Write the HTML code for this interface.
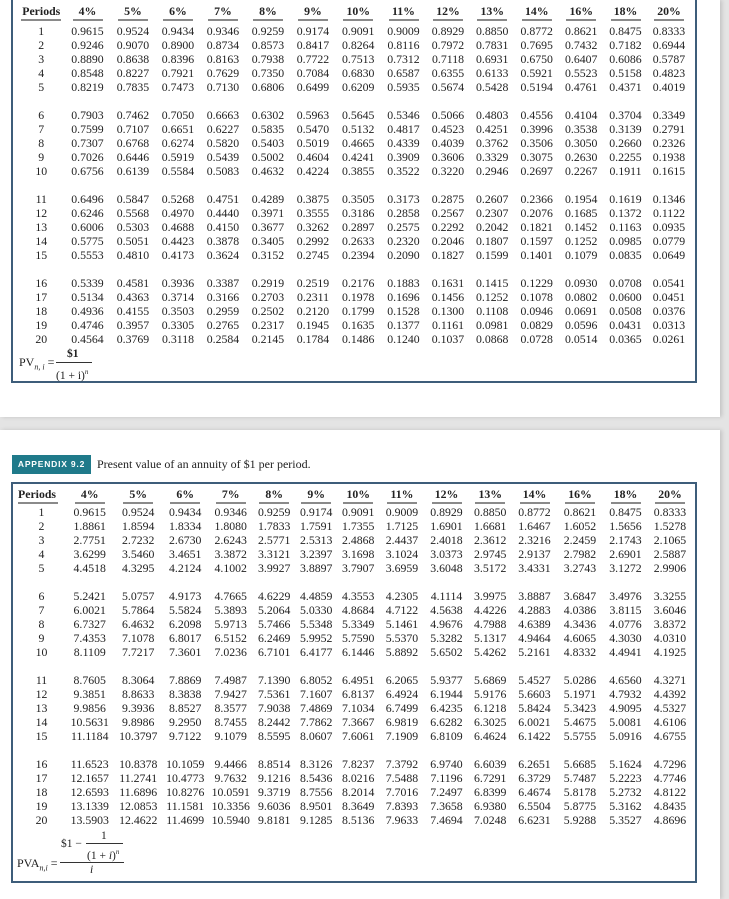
<!DOCTYPE html>
<html><head><meta charset="utf-8"><style>
html,body{margin:0;padding:0;}
body{width:729px;height:899px;background:#e4e4e4;position:relative;overflow:hidden;font-family:"Liberation Serif",serif;color:#222;}
.pg{position:absolute;left:0;width:720px;background:#fff;box-shadow:2px 0 4px rgba(0,0,0,.15);}
.box{position:absolute;border:2px solid #3e5d7a;}
table{position:absolute;left:18px;border-collapse:collapse;table-layout:fixed;font-size:11.8px;}
td{text-align:center;padding:0;height:14px;line-height:14px;white-space:nowrap;}
th{padding:0;vertical-align:top;font-weight:bold;font-size:11.8px;}
th span{display:inline-block;width:30px;line-height:13px;border-bottom:2px solid #8a8a8a;padding-bottom:1px;}
th.p span{width:40px;}
tr.g td{height:14px;}
.a{position:absolute;font-size:11.5px;white-space:nowrap;line-height:13px;}
</style></head><body>
<div class="pg" style="top:0;height:417px"></div>
<div class="pg" style="top:430px;height:469px"></div>
<div class="box" style="left:11px;top:-2px;width:682px;height:381px"></div>
<div class="box" style="left:11px;top:482px;width:682px;height:397px"></div>

<table style="top:0">
<colgroup><col style="width:46.5px"><col style="width:46px"><col style="width:45px"><col style="width:45px"><col style="width:45px"><col style="width:45px"><col style="width:45px"><col style="width:45.5px"><col style="width:45px"><col style="width:44px"><col style="width:44.5px"><col style="width:44.5px"><col style="width:44.5px"><col style="width:44px"><col style="width:43px"></colgroup>
<tr style="height:24px"><th class="p" style="padding-top:4px"><span>Periods</span></th><th style="padding-top:4px"><span>4%</span></th><th style="padding-top:4px"><span>5%</span></th><th style="padding-top:4px"><span>6%</span></th><th style="padding-top:4px"><span>7%</span></th><th style="padding-top:4px"><span>8%</span></th><th style="padding-top:4px"><span>9%</span></th><th style="padding-top:4px"><span>10%</span></th><th style="padding-top:4px"><span>11%</span></th><th style="padding-top:4px"><span>12%</span></th><th style="padding-top:4px"><span>13%</span></th><th style="padding-top:4px"><span>14%</span></th><th style="padding-top:4px"><span>16%</span></th><th style="padding-top:4px"><span>18%</span></th><th style="padding-top:4px"><span>20%</span></th></tr>
<tr><td>1</td><td>0.9615</td><td>0.9524</td><td>0.9434</td><td>0.9346</td><td>0.9259</td><td>0.9174</td><td>0.9091</td><td>0.9009</td><td>0.8929</td><td>0.8850</td><td>0.8772</td><td>0.8621</td><td>0.8475</td><td>0.8333</td></tr>
<tr><td>2</td><td>0.9246</td><td>0.9070</td><td>0.8900</td><td>0.8734</td><td>0.8573</td><td>0.8417</td><td>0.8264</td><td>0.8116</td><td>0.7972</td><td>0.7831</td><td>0.7695</td><td>0.7432</td><td>0.7182</td><td>0.6944</td></tr>
<tr><td>3</td><td>0.8890</td><td>0.8638</td><td>0.8396</td><td>0.8163</td><td>0.7938</td><td>0.7722</td><td>0.7513</td><td>0.7312</td><td>0.7118</td><td>0.6931</td><td>0.6750</td><td>0.6407</td><td>0.6086</td><td>0.5787</td></tr>
<tr><td>4</td><td>0.8548</td><td>0.8227</td><td>0.7921</td><td>0.7629</td><td>0.7350</td><td>0.7084</td><td>0.6830</td><td>0.6587</td><td>0.6355</td><td>0.6133</td><td>0.5921</td><td>0.5523</td><td>0.5158</td><td>0.4823</td></tr>
<tr><td>5</td><td>0.8219</td><td>0.7835</td><td>0.7473</td><td>0.7130</td><td>0.6806</td><td>0.6499</td><td>0.6209</td><td>0.5935</td><td>0.5674</td><td>0.5428</td><td>0.5194</td><td>0.4761</td><td>0.4371</td><td>0.4019</td></tr>
<tr class="g"><td colspan="15"></td></tr>
<tr><td>6</td><td>0.7903</td><td>0.7462</td><td>0.7050</td><td>0.6663</td><td>0.6302</td><td>0.5963</td><td>0.5645</td><td>0.5346</td><td>0.5066</td><td>0.4803</td><td>0.4556</td><td>0.4104</td><td>0.3704</td><td>0.3349</td></tr>
<tr><td>7</td><td>0.7599</td><td>0.7107</td><td>0.6651</td><td>0.6227</td><td>0.5835</td><td>0.5470</td><td>0.5132</td><td>0.4817</td><td>0.4523</td><td>0.4251</td><td>0.3996</td><td>0.3538</td><td>0.3139</td><td>0.2791</td></tr>
<tr><td>8</td><td>0.7307</td><td>0.6768</td><td>0.6274</td><td>0.5820</td><td>0.5403</td><td>0.5019</td><td>0.4665</td><td>0.4339</td><td>0.4039</td><td>0.3762</td><td>0.3506</td><td>0.3050</td><td>0.2660</td><td>0.2326</td></tr>
<tr><td>9</td><td>0.7026</td><td>0.6446</td><td>0.5919</td><td>0.5439</td><td>0.5002</td><td>0.4604</td><td>0.4241</td><td>0.3909</td><td>0.3606</td><td>0.3329</td><td>0.3075</td><td>0.2630</td><td>0.2255</td><td>0.1938</td></tr>
<tr><td>10</td><td>0.6756</td><td>0.6139</td><td>0.5584</td><td>0.5083</td><td>0.4632</td><td>0.4224</td><td>0.3855</td><td>0.3522</td><td>0.3220</td><td>0.2946</td><td>0.2697</td><td>0.2267</td><td>0.1911</td><td>0.1615</td></tr>
<tr class="g"><td colspan="15"></td></tr>
<tr><td>11</td><td>0.6496</td><td>0.5847</td><td>0.5268</td><td>0.4751</td><td>0.4289</td><td>0.3875</td><td>0.3505</td><td>0.3173</td><td>0.2875</td><td>0.2607</td><td>0.2366</td><td>0.1954</td><td>0.1619</td><td>0.1346</td></tr>
<tr><td>12</td><td>0.6246</td><td>0.5568</td><td>0.4970</td><td>0.4440</td><td>0.3971</td><td>0.3555</td><td>0.3186</td><td>0.2858</td><td>0.2567</td><td>0.2307</td><td>0.2076</td><td>0.1685</td><td>0.1372</td><td>0.1122</td></tr>
<tr><td>13</td><td>0.6006</td><td>0.5303</td><td>0.4688</td><td>0.4150</td><td>0.3677</td><td>0.3262</td><td>0.2897</td><td>0.2575</td><td>0.2292</td><td>0.2042</td><td>0.1821</td><td>0.1452</td><td>0.1163</td><td>0.0935</td></tr>
<tr><td>14</td><td>0.5775</td><td>0.5051</td><td>0.4423</td><td>0.3878</td><td>0.3405</td><td>0.2992</td><td>0.2633</td><td>0.2320</td><td>0.2046</td><td>0.1807</td><td>0.1597</td><td>0.1252</td><td>0.0985</td><td>0.0779</td></tr>
<tr><td>15</td><td>0.5553</td><td>0.4810</td><td>0.4173</td><td>0.3624</td><td>0.3152</td><td>0.2745</td><td>0.2394</td><td>0.2090</td><td>0.1827</td><td>0.1599</td><td>0.1401</td><td>0.1079</td><td>0.0835</td><td>0.0649</td></tr>
<tr class="g"><td colspan="15"></td></tr>
<tr><td>16</td><td>0.5339</td><td>0.4581</td><td>0.3936</td><td>0.3387</td><td>0.2919</td><td>0.2519</td><td>0.2176</td><td>0.1883</td><td>0.1631</td><td>0.1415</td><td>0.1229</td><td>0.0930</td><td>0.0708</td><td>0.0541</td></tr>
<tr><td>17</td><td>0.5134</td><td>0.4363</td><td>0.3714</td><td>0.3166</td><td>0.2703</td><td>0.2311</td><td>0.1978</td><td>0.1696</td><td>0.1456</td><td>0.1252</td><td>0.1078</td><td>0.0802</td><td>0.0600</td><td>0.0451</td></tr>
<tr><td>18</td><td>0.4936</td><td>0.4155</td><td>0.3503</td><td>0.2959</td><td>0.2502</td><td>0.2120</td><td>0.1799</td><td>0.1528</td><td>0.1300</td><td>0.1108</td><td>0.0946</td><td>0.0691</td><td>0.0508</td><td>0.0376</td></tr>
<tr><td>19</td><td>0.4746</td><td>0.3957</td><td>0.3305</td><td>0.2765</td><td>0.2317</td><td>0.1945</td><td>0.1635</td><td>0.1377</td><td>0.1161</td><td>0.0981</td><td>0.0829</td><td>0.0596</td><td>0.0431</td><td>0.0313</td></tr>
<tr><td>20</td><td>0.4564</td><td>0.3769</td><td>0.3118</td><td>0.2584</td><td>0.2145</td><td>0.1784</td><td>0.1486</td><td>0.1240</td><td>0.1037</td><td>0.0868</td><td>0.0728</td><td>0.0514</td><td>0.0365</td><td>0.0261</td></tr>
</table>

<div class="a" style="left:19px;top:356px;font-size:12px">PV<sub style="font-size:8px;font-style:italic">n, i</sub> =</div>
<div class="a" style="left:67px;top:348px;font-weight:bold">$1</div>
<div style="position:absolute;left:56px;top:362px;width:36px;height:1px;background:#333"></div>
<div class="a" style="left:56px;top:366px">(1 + i)<sup style="font-size:7px;font-style:italic">n</sup></div>

<div style="position:absolute;left:12px;top:455px;width:79px;height:19px;background:#1f7a8a;color:#fff;font-family:'Liberation Sans',sans-serif;font-weight:bold;font-size:8.5px;letter-spacing:.8px;line-height:19px;text-align:center">APPENDIX 9.2</div>
<div class="a" style="left:97px;top:458px;font-size:12px">Present value of an annuity of $1 per period.</div>

<table style="top:484px">
<colgroup><col style="width:47px"><col style="width:49.5px"><col style="width:47.5px"><col style="width:46.5px"><col style="width:44.5px"><col style="width:42.5px"><col style="width:41.5px"><col style="width:42.5px"><col style="width:45px"><col style="width:44px"><col style="width:43.5px"><col style="width:45px"><col style="width:46px"><col style="width:45px"><col style="width:44px"></colgroup>
<tr style="height:21px"><th class="p" style="padding-top:3px;text-align:left"><span>Periods</span></th><th style="padding-top:3px"><span>4%</span></th><th style="padding-top:3px"><span>5%</span></th><th style="padding-top:3px"><span>6%</span></th><th style="padding-top:3px"><span>7%</span></th><th style="padding-top:3px"><span>8%</span></th><th style="padding-top:3px"><span>9%</span></th><th style="padding-top:3px"><span>10%</span></th><th style="padding-top:3px"><span>11%</span></th><th style="padding-top:3px"><span>12%</span></th><th style="padding-top:3px"><span>13%</span></th><th style="padding-top:3px"><span>14%</span></th><th style="padding-top:3px"><span>16%</span></th><th style="padding-top:3px"><span>18%</span></th><th style="padding-top:3px"><span>20%</span></th></tr>
<tr><td>1</td><td>0.9615</td><td>0.9524</td><td>0.9434</td><td>0.9346</td><td>0.9259</td><td>0.9174</td><td>0.9091</td><td>0.9009</td><td>0.8929</td><td>0.8850</td><td>0.8772</td><td>0.8621</td><td>0.8475</td><td>0.8333</td></tr>
<tr><td>2</td><td>1.8861</td><td>1.8594</td><td>1.8334</td><td>1.8080</td><td>1.7833</td><td>1.7591</td><td>1.7355</td><td>1.7125</td><td>1.6901</td><td>1.6681</td><td>1.6467</td><td>1.6052</td><td>1.5656</td><td>1.5278</td></tr>
<tr><td>3</td><td>2.7751</td><td>2.7232</td><td>2.6730</td><td>2.6243</td><td>2.5771</td><td>2.5313</td><td>2.4868</td><td>2.4437</td><td>2.4018</td><td>2.3612</td><td>2.3216</td><td>2.2459</td><td>2.1743</td><td>2.1065</td></tr>
<tr><td>4</td><td>3.6299</td><td>3.5460</td><td>3.4651</td><td>3.3872</td><td>3.3121</td><td>3.2397</td><td>3.1698</td><td>3.1024</td><td>3.0373</td><td>2.9745</td><td>2.9137</td><td>2.7982</td><td>2.6901</td><td>2.5887</td></tr>
<tr><td>5</td><td>4.4518</td><td>4.3295</td><td>4.2124</td><td>4.1002</td><td>3.9927</td><td>3.8897</td><td>3.7907</td><td>3.6959</td><td>3.6048</td><td>3.5172</td><td>3.4331</td><td>3.2743</td><td>3.1272</td><td>2.9906</td></tr>
<tr class="g"><td colspan="15"></td></tr>
<tr><td>6</td><td>5.2421</td><td>5.0757</td><td>4.9173</td><td>4.7665</td><td>4.6229</td><td>4.4859</td><td>4.3553</td><td>4.2305</td><td>4.1114</td><td>3.9975</td><td>3.8887</td><td>3.6847</td><td>3.4976</td><td>3.3255</td></tr>
<tr><td>7</td><td>6.0021</td><td>5.7864</td><td>5.5824</td><td>5.3893</td><td>5.2064</td><td>5.0330</td><td>4.8684</td><td>4.7122</td><td>4.5638</td><td>4.4226</td><td>4.2883</td><td>4.0386</td><td>3.8115</td><td>3.6046</td></tr>
<tr><td>8</td><td>6.7327</td><td>6.4632</td><td>6.2098</td><td>5.9713</td><td>5.7466</td><td>5.5348</td><td>5.3349</td><td>5.1461</td><td>4.9676</td><td>4.7988</td><td>4.6389</td><td>4.3436</td><td>4.0776</td><td>3.8372</td></tr>
<tr><td>9</td><td>7.4353</td><td>7.1078</td><td>6.8017</td><td>6.5152</td><td>6.2469</td><td>5.9952</td><td>5.7590</td><td>5.5370</td><td>5.3282</td><td>5.1317</td><td>4.9464</td><td>4.6065</td><td>4.3030</td><td>4.0310</td></tr>
<tr><td>10</td><td>8.1109</td><td>7.7217</td><td>7.3601</td><td>7.0236</td><td>6.7101</td><td>6.4177</td><td>6.1446</td><td>5.8892</td><td>5.6502</td><td>5.4262</td><td>5.2161</td><td>4.8332</td><td>4.4941</td><td>4.1925</td></tr>
<tr class="g"><td colspan="15"></td></tr>
<tr><td>11</td><td>8.7605</td><td>8.3064</td><td>7.8869</td><td>7.4987</td><td>7.1390</td><td>6.8052</td><td>6.4951</td><td>6.2065</td><td>5.9377</td><td>5.6869</td><td>5.4527</td><td>5.0286</td><td>4.6560</td><td>4.3271</td></tr>
<tr><td>12</td><td>9.3851</td><td>8.8633</td><td>8.3838</td><td>7.9427</td><td>7.5361</td><td>7.1607</td><td>6.8137</td><td>6.4924</td><td>6.1944</td><td>5.9176</td><td>5.6603</td><td>5.1971</td><td>4.7932</td><td>4.4392</td></tr>
<tr><td>13</td><td>9.9856</td><td>9.3936</td><td>8.8527</td><td>8.3577</td><td>7.9038</td><td>7.4869</td><td>7.1034</td><td>6.7499</td><td>6.4235</td><td>6.1218</td><td>5.8424</td><td>5.3423</td><td>4.9095</td><td>4.5327</td></tr>
<tr><td>14</td><td>10.5631</td><td>9.8986</td><td>9.2950</td><td>8.7455</td><td>8.2442</td><td>7.7862</td><td>7.3667</td><td>6.9819</td><td>6.6282</td><td>6.3025</td><td>6.0021</td><td>5.4675</td><td>5.0081</td><td>4.6106</td></tr>
<tr><td>15</td><td>11.1184</td><td>10.3797</td><td>9.7122</td><td>9.1079</td><td>8.5595</td><td>8.0607</td><td>7.6061</td><td>7.1909</td><td>6.8109</td><td>6.4624</td><td>6.1422</td><td>5.5755</td><td>5.0916</td><td>4.6755</td></tr>
<tr class="g"><td colspan="15"></td></tr>
<tr><td>16</td><td>11.6523</td><td>10.8378</td><td>10.1059</td><td>9.4466</td><td>8.8514</td><td>8.3126</td><td>7.8237</td><td>7.3792</td><td>6.9740</td><td>6.6039</td><td>6.2651</td><td>5.6685</td><td>5.1624</td><td>4.7296</td></tr>
<tr><td>17</td><td>12.1657</td><td>11.2741</td><td>10.4773</td><td>9.7632</td><td>9.1216</td><td>8.5436</td><td>8.0216</td><td>7.5488</td><td>7.1196</td><td>6.7291</td><td>6.3729</td><td>5.7487</td><td>5.2223</td><td>4.7746</td></tr>
<tr><td>18</td><td>12.6593</td><td>11.6896</td><td>10.8276</td><td>10.0591</td><td>9.3719</td><td>8.7556</td><td>8.2014</td><td>7.7016</td><td>7.2497</td><td>6.8399</td><td>6.4674</td><td>5.8178</td><td>5.2732</td><td>4.8122</td></tr>
<tr><td>19</td><td>13.1339</td><td>12.0853</td><td>11.1581</td><td>10.3356</td><td>9.6036</td><td>8.9501</td><td>8.3649</td><td>7.8393</td><td>7.3658</td><td>6.9380</td><td>6.5504</td><td>5.8775</td><td>5.3162</td><td>4.8435</td></tr>
<tr><td>20</td><td>13.5903</td><td>12.4622</td><td>11.4699</td><td>10.5940</td><td>9.8181</td><td>9.1285</td><td>8.5136</td><td>7.9633</td><td>7.4694</td><td>7.0248</td><td>6.6231</td><td>5.9288</td><td>5.3527</td><td>4.8696</td></tr>
</table>

<div class="a" style="left:61px;top:838px">$1 &minus;</div>
<div class="a" style="left:101px;top:830px">1</div>
<div style="position:absolute;left:86px;top:843px;width:37px;height:1px;background:#333"></div>
<div class="a" style="left:87px;top:846px">(1 + <i>i</i>)<sup style="font-size:7px;font-style:italic">n</sup></div>
<div style="position:absolute;left:60px;top:862px;width:64px;height:1px;background:#333"></div>
<div class="a" style="left:17px;top:857px;font-size:12px">PVA<sub style="font-size:8px;font-style:italic">n,i</sub> =</div>
<div class="a" style="left:90px;top:864px;font-style:italic">i</div>
</body></html>
